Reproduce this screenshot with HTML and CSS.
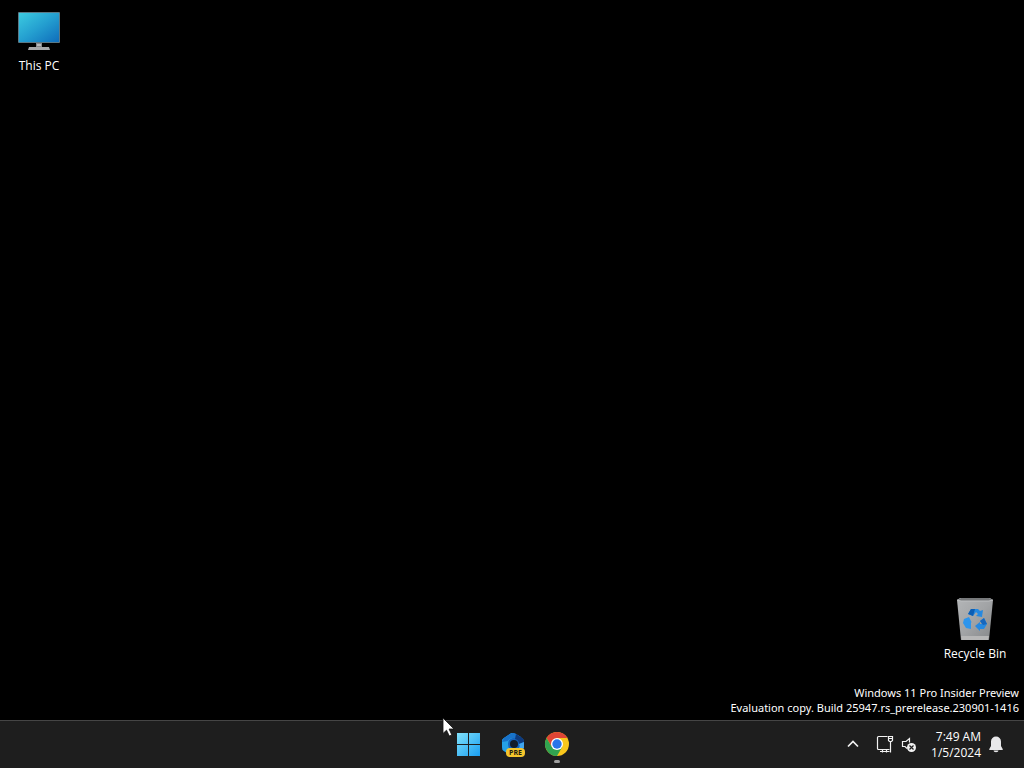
FILE: index.html
```html
<!DOCTYPE html>
<html lang="en">
<head>
<meta charset="utf-8">
<meta name="viewport" content="width=device-width, initial-scale=1">
<title>Desktop</title>
<link rel="stylesheet" href="styles.css">
</head>
<body>
<main class="desktop">
  <button class="shortcut shortcut-pc" type="button">
    <svg width="48" height="48" viewBox="0 0 48 48" aria-hidden="true">
      <defs>
        <linearGradient id="screen" x1="0" y1="0" x2="1" y2="1">
          <stop offset="0" stop-color="#3ccbe0"/><stop offset=".5" stop-color="#249fd0"/><stop offset="1" stop-color="#0f6dbb"/>
        </linearGradient>
      </defs>
      <rect x="3" y="6" width="42" height="31" rx="1" fill="#5b7885"/>
      <rect x="4" y="7" width="40" height="29" fill="url(#screen)"/>
      <path d="M21 37h6v5h-6z" fill="#84878a"/>
      <path d="M22 38h4v2h-4z" fill="#b6b9bb"/>
      <path d="M14 41h20l1 3H13z" fill="#a6a8aa"/>
    </svg>
    <span>This PC</span>
  </button>
  <button class="shortcut shortcut-bin" type="button">
    <svg width="48" height="48" viewBox="0 0 48 48" aria-hidden="true">
      <defs>
        <linearGradient id="bin" x1="0" y1="0" x2="1" y2="1">
          <stop offset="0" stop-color="#b4b6b8"/><stop offset=".5" stop-color="#a2a4a6"/><stop offset="1" stop-color="#858789"/>
        </linearGradient>
      </defs>
      <path d="M6 6 9 4h30l3 2-4 40H10z" fill="url(#bin)"/>
      <path d="M7 6 10 4h28l3 2-3 1H10z" fill="#77797b"/>
      <path d="M6 6l4 1h28l4-1" fill="none" stroke="#bec0c2"/>
      <path d="M10 42h28l-1 4H11z" fill="#b7b7b7"/>
      <path d="M17 20l3-5h7l2 2 3-1-1 7-6-1 2-2-2-2-3 4z" fill="#2689e0"/>
      <path d="M17 20l3-5h4l-2 7z" fill="#0c5eb4"/>
      <path d="M13 25l5-2 3 6-1-1v7l-5-1-3-5z" fill="#2d95ec"/>
      <path d="M29 27l4-3 3 6-3 5h-4v2l-5-5 5-4v2h2z" fill="#2689e0"/>
      <path d="M29 27l4-3 3 6-4 1z" fill="#1767bd"/>
    </svg>
    <span>Recycle Bin</span>
  </button>
  <p class="watermark">Windows 11 Pro Insider Preview<br>Evaluation copy. Build 25947.rs_prerelease.230901-1416</p>
</main>
<footer class="taskbar">
  <nav class="apps" aria-label="Taskbar">
    <button class="app" type="button" aria-label="Start">
      <svg width="44" height="48" viewBox="0 0 44 48" aria-hidden="true">
        <defs><linearGradient id="win" gradientUnits="userSpaceOnUse" x1="11" y1="12" x2="34" y2="35"><stop offset="0" stop-color="#80e2fb"/><stop offset="1" stop-color="#199df0"/></linearGradient></defs>
        <path d="M11 12h11v11H11zM23 12h11v11H23zM11 24h11v11H11zM23 24h11v11H23z" fill="url(#win)"/>
      </svg>
    </button>
    <button class="app" type="button" aria-label="Preview app">
      <svg width="44" height="48" viewBox="0 0 44 48" aria-hidden="true">
        <path d="M20 13q3-2 6 0l6 4q2 1 2 4v6q0 2-3 4l-5 3q-3 2-6 0l-6-4q-2-1-2-4v-6q0-2 2-3z" fill="#1563bd"/>
        <path d="M20 13q2-2 4 0l-1 4q-5 1-5 6 0 5 4 8l-2 3-6-4q-2-1-2-4v-6q0-2 2-3z" fill="#25a0e6"/>
        <path d="M14 17l6-4q3-2 6 0l5 3-4 2q-6-3-9 2l-6 1z" fill="#1873ca"/>
        <path d="M26 13l6 4q2 1 2 4l-5 2q0-4-4-5z" fill="#0d3a7e"/>
        <path d="M34 21v6l-7 2q4-3 2-6z" fill="#3fa5ee"/>
        <circle cx="24" cy="23" r="4" fill="#131c2a"/>
        <rect x="16" y="27" width="19" height="9" rx="4" fill="#f5c52c"/>
        <text class="badge-text" x="25.5" y="34" text-anchor="middle">PRE</text>
      </svg>
    </button>
    <button class="app" type="button" aria-label="Google Chrome">
      <svg width="44" height="48" viewBox="0 0 44 48" aria-hidden="true">
        <circle cx="23" cy="23" r="12" fill="#f9c71c"/>
        <path d="M12.600 17A12 12 0 0 1 33.400 17H23l-5.200 9z" fill="#df4536"/>
        <path d="M12.600 17A12 12 0 0 0 23 35l5.200-9H17.800z" fill="#31a350"/>
        <circle cx="23" cy="23" r="6" fill="#fff"/>
        <circle cx="23" cy="23" r="4.700" fill="#2874e8"/>
        <rect x="20" y="39" width="6" height="3" rx="1.500" fill="#a0a0a0"/>
      </svg>
    </button>
  </nav>
  <div class="tray">
    <button class="tray-button" type="button" aria-label="Show hidden icons">
      <svg width="24" height="24" viewBox="0 0 24 24" aria-hidden="true"><path d="M7 13.500l5-5 5 5" fill="none" stroke="#f2f2f2" stroke-width="1.700"/></svg>
    </button>
    <button class="tray-button status" type="button" aria-label="Network and volume">
      <svg width="24" height="24" viewBox="0 0 24 24" aria-hidden="true">
        <g fill="none" stroke="#f2f2f2" stroke-width="1.200"><path d="M14.500 3.500h-9q-1 0-1 1v11q0 1 1 1h11M9.500 16.500v3M13.500 16.500v3M7 18.500h9.500"/><path d="M15.500 3.500h4v4l-1 1h-2l-1-1zM15.500 5.500h4M17.500 8.500v11"/></g>
      </svg>
      <svg width="24" height="24" viewBox="0 0 24 24" aria-hidden="true">
        <path d="M12.500 9.500V5.500L9 8.500H5.500v5H8l2 2" fill="none" stroke="#f2f2f2" stroke-width="1.200"/>
        <circle cx="14.500" cy="14.500" r="4.500" fill="#f2f2f2"/>
        <path d="M12.500 12.500l4 4m0-4l-4 4" stroke="#202020" stroke-width="1.200"/>
      </svg>
    </button>
    <button class="clock" type="button"><time datetime="2024-01-05T07:49">7:49 AM<br>1/5/2024</time></button>
    <button class="tray-button" type="button" aria-label="Notifications">
      <svg width="24" height="24" viewBox="0 0 24 24" aria-hidden="true"><path d="M12 3.500a5 5 0 0 0-5 5V13l-1.700 3v1h13.400v-1L17 13V8.500a5 5 0 0 0-5-5zM9.500 17.500h5a2.500 1.800 0 0 1-5 0z" fill="#e8e8ea"/></svg>
    </button>
  </div>
</footer>
<svg class="cursor" width="14" height="22" viewBox="0 0 14 22" aria-hidden="true"><path d="M1 1v15.500l3.500-3.300L7.300 19l2.500-1.100L7.100 12H12z" fill="#fff" stroke="#111" stroke-width=".8"/></svg>
</body>
</html>
```
FILE: styles.css
```css
* {
  box-sizing: border-box;
}

body {
  display: flex;
  flex-direction: column;
  min-height: 100vh;
  margin: 0;
  background: #000;
  color: #fff;
  font: 12px/15px "Open Sans", "Noto Sans", sans-serif;
}

button {
  padding: 0;
  border: 0;
  background: none;
  color: inherit;
  font: inherit;
}

svg {
  display: block;
  flex: none;
}

.desktop {
  display: flex;
  flex: 1;
  flex-direction: column;
  padding: 6px 5px 5px 1px;
}

.shortcut {
  display: flex;
  flex-direction: column;
  align-items: center;
  gap: 4px;
  width: 76px;
}

.shortcut-bin {
  align-self: flex-end;
  margin: auto 6px 24px 0;
}

.watermark {
  margin: 0;
  font-family: "Noto Sans", "Open Sans", sans-serif;
  font-size: 11px;
  text-align: right;
}

.taskbar {
  display: grid;
  grid-template-columns: 1fr auto 1fr;
  height: 48px;
  border-top: 1px solid #454545;
  background: #1e1e1e;
}

.apps {
  display: flex;
  grid-column: 2;
}

.badge-text {
  fill: #1c1a10;
  font: 700 7px "Open Sans", sans-serif;
}

.tray {
  display: flex;
  align-items: center;
  justify-content: flex-end;
  padding-right: 16px;
}

.status {
  display: flex;
  margin: 0 10px 0 8px;
}

.clock {
  margin-right: 3px;
  line-height: 16px;
  text-align: right;
}

.cursor {
  position: absolute;
  top: 717px;
  left: 442px;
}
```
